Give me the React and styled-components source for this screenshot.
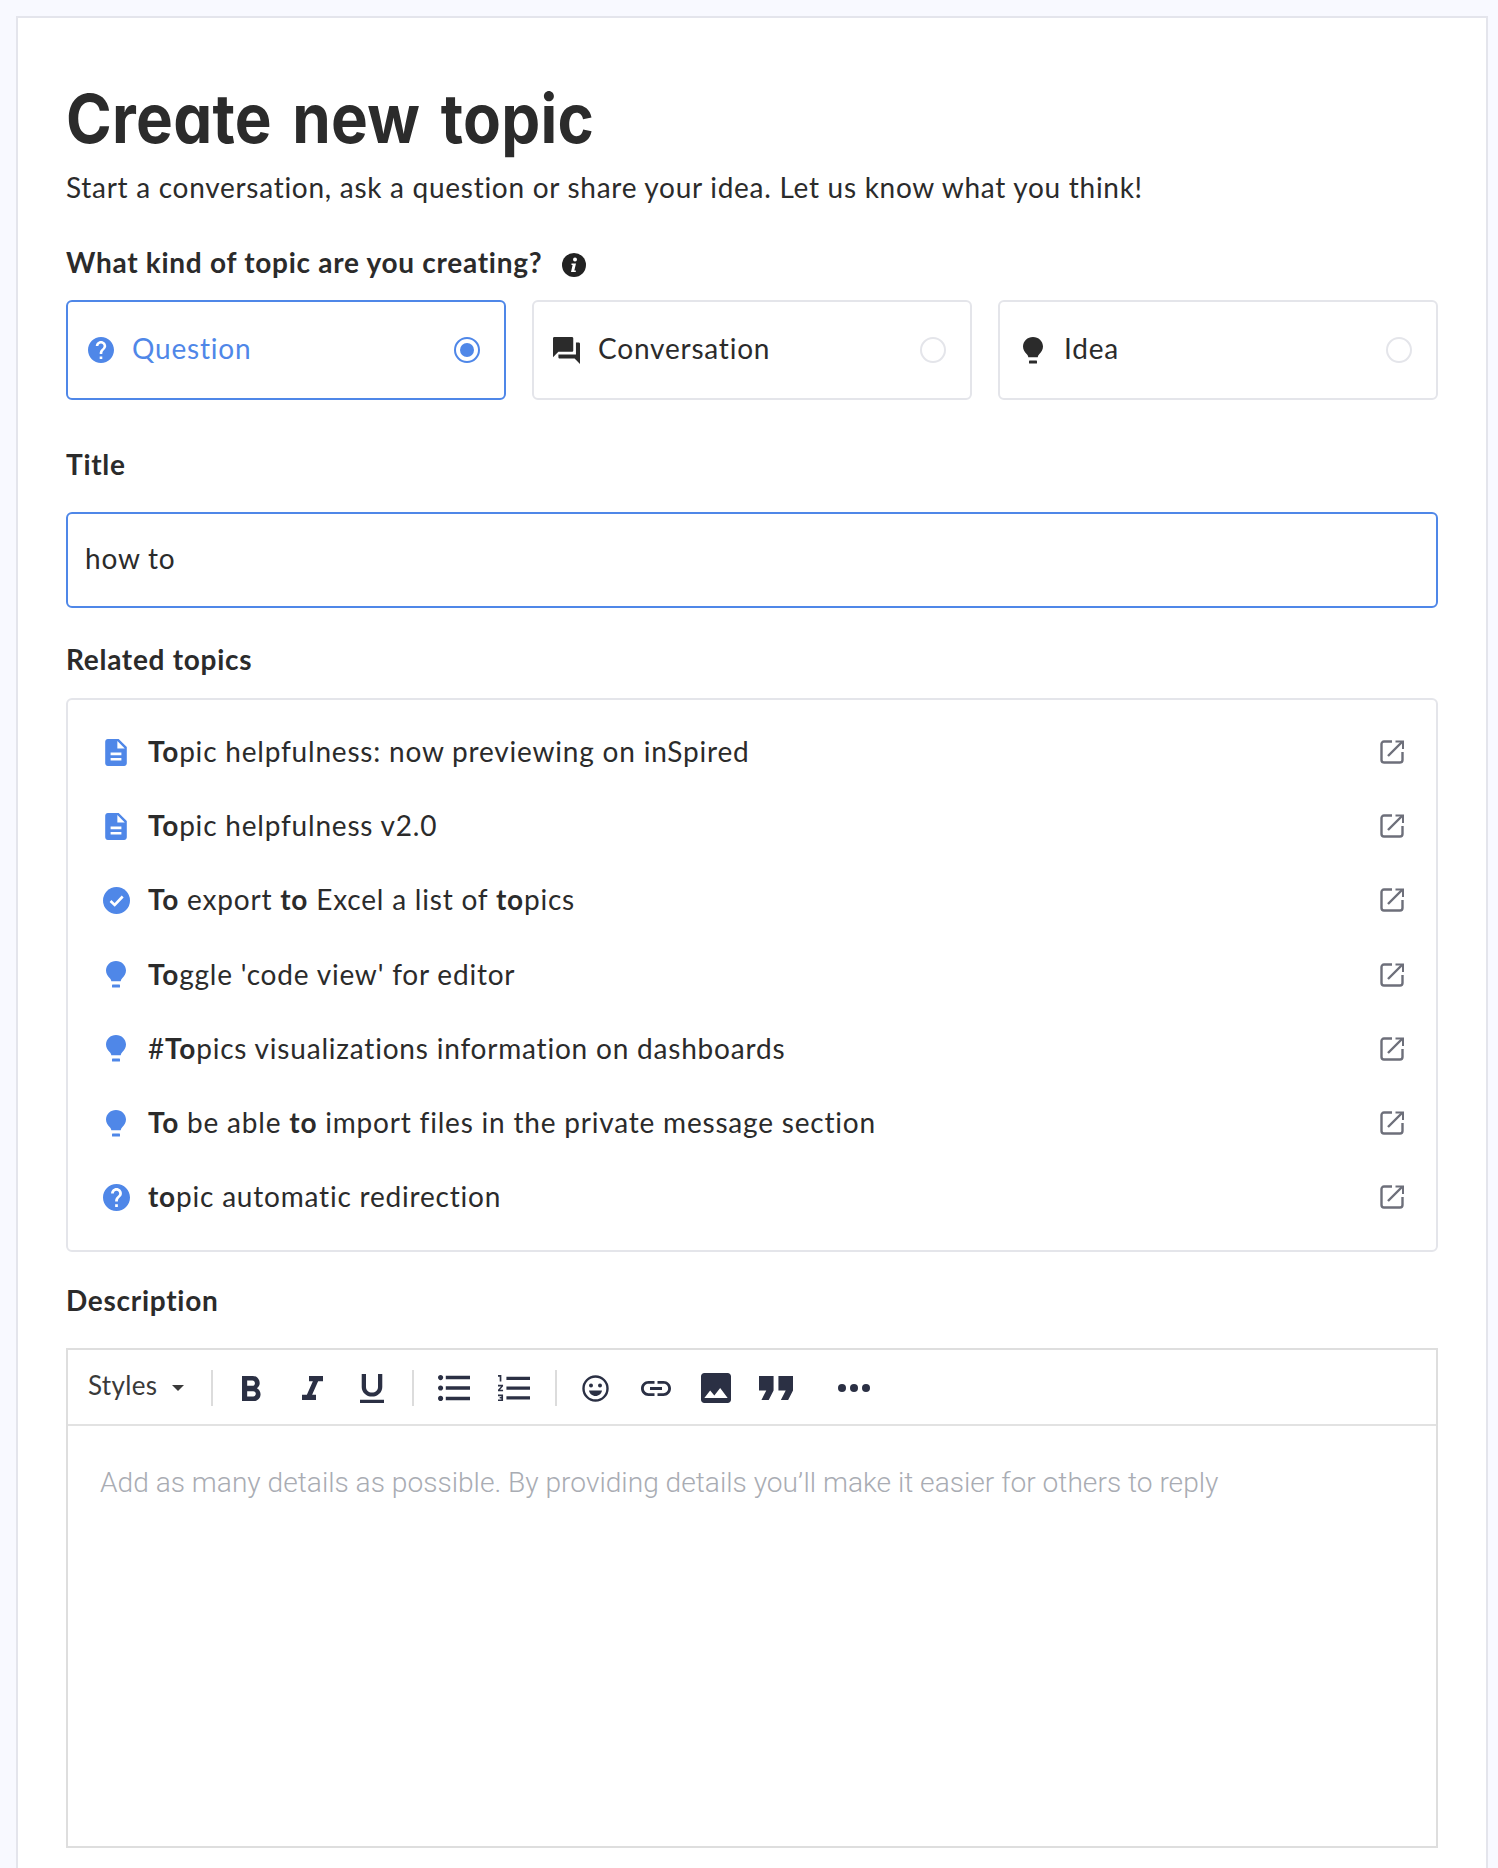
import React from "react";
import styled, { createGlobalStyle } from "styled-components";

const Global = createGlobalStyle`
  html, body { margin: 0; padding: 0; height: 1868px; overflow: hidden; background: #f8f9ff; }
  body { font-family: "Lato", "Noto Sans", sans-serif; color: #2b2b2b; }
`;

const BLUE = "#4f87e8";
const Page = styled.div`padding: 16px 10px 0 16px; height: 1868px; box-sizing: border-box;`;
const Card = styled.main`
  background: #fff; border: 2px solid #e4e5ec; border-bottom: none; box-sizing: border-box;
  height: 1852px; padding: 60px 48px 0;
`;
const Title = styled.h1`
  margin: 0; height: 80px; font: 700 68px/80px "Inter", sans-serif; font-feature-settings: "cv11";
  letter-spacing: .3px; word-spacing: 6px; color: #2b2b2b; transform: scaleX(.91); transform-origin: left center; white-space: nowrap;
`;
const Subtitle = styled.p`margin: 9px 0 0; font-size: 28px; line-height: 40px; letter-spacing: .72px;`;
const Label = styled.div`
  display: flex; align-items: center; gap: 20px; margin-top: ${p => p.$mt}px; height: 40px;
  font-size: 28px; font-weight: 700; letter-spacing: .72px;
`;
const LabelText = styled.span`padding-bottom: 2px;`;
const InfoWrap = styled.span`display: flex; margin-top: 3px;`;
const Options = styled.div`display: grid; grid-template-columns: repeat(3, 1fr); gap: 26px; margin-top: 17px;`;
const Option = styled.div`
  display: flex; align-items: center; box-sizing: border-box; height: 100px; padding: 0 24px 0 19px;
  border: 2px solid ${p => p.$active ? BLUE : "#e4e5ea"}; border-radius: 6px;
  color: ${p => p.$active ? BLUE : "#2b2b2b"}; font-size: 28px; letter-spacing: .8px;
`;
const OptionIcon = styled.span`display: flex; justify-content: center; width: 27px; margin-right: 18px; flex: none;`;
const OptionText = styled.span`flex: 1; padding-bottom: 4px;`;
const Radio = styled.span`
  width: 26px; height: 26px; box-sizing: border-box; border-radius: 50%; flex: none;
  border: 2px solid ${p => p.$active ? BLUE : "#e4e5ea"}; display: flex; align-items: center; justify-content: center;
  &::after { content: ""; width: 14px; height: 14px; border-radius: 50%; background: ${p => p.$active ? BLUE : "transparent"}; }
`;
const Input = styled.div`
  box-sizing: border-box; height: 96px; margin-top: 27px; padding: 0 17px 4px; display: flex; align-items: center;
  border: 2px solid ${BLUE}; border-radius: 6px; font-size: 28px; letter-spacing: .8px;
`;
const List = styled.ul`
  list-style: none; margin: 18px 0 0; padding: 15px 32px 14px 34px; box-sizing: border-box; height: 554px;
  border: 2px solid #e4e5ea; border-radius: 6px;
`;
const Row = styled.li`display: flex; align-items: center; height: 74.2px; font-size: 28px; letter-spacing: .8px;`;
const RowIcon = styled.span`display: flex; justify-content: center; width: 28px; margin-right: 18px; flex: none;`;
const RowText = styled.span`flex: 1; padding-bottom: 2px; b { font-weight: 700; }`;
const Editor = styled.div`
  margin-top: 27px; height: 500px; box-sizing: border-box; border: 2px solid #dedede; display: flex; flex-direction: column;
`;
const Toolbar = styled.div`
  display: flex; align-items: center; flex: none; padding: 2px 0 0 20px; box-sizing: content-box; height: 72px;
  border-bottom: 2px solid #e2e2e2; color: #2b3044;
`;
const StylesText = styled.span`font-size: 26px; letter-spacing: .35px; color: #3a3a3a; position: relative; top: -3px;`;
const Caret = styled.span`
  width: 0; height: 0; margin-left: 15px; border: 6px solid transparent; border-top: 6px solid #3a3a3a; border-bottom: none;
`;
const Divider = styled.span`width: 2px; height: 36px; margin-left: ${p => p.$ml}px; background: #dcdcdc; flex: none;`;
const Tool = styled.svg`margin-left: ${p => p.$ml}px; flex: none; fill: currentColor; display: block;`;
const Placeholder = styled.div`
  padding: 37px 32px; font: 300 28.13px/40px "Roboto", sans-serif; color: #a9acb3;
`;

const P = {
  help: "M12 2C6.48 2 2 6.48 2 12s4.48 10 10 10 10-4.48 10-10S17.52 2 12 2zm1 17h-2v-2h2v2zm2.07-7.75l-.9.92C13.45 12.9 13 13.5 13 15h-2v-.5c0-1.1.45-2.1 1.17-2.83l1.24-1.26c.37-.36.59-.86.59-1.41 0-1.1-.9-2-2-2s-2 .9-2 2H8c0-2.21 1.79-4 4-4s4 1.79 4 4c0 .88-.36 1.68-.93 2.25z",
  forum: "M21 6h-2v9H6v2c0 .55.45 1 1 1h11l4 4V7c0-.55-.45-1-1-1zm-4 6V3c0-.55-.45-1-1-1H3c-.55 0-1 .45-1 1v14l4-4h10c.55 0 1-.45 1-1z",
  doc: "M14 2H6c-1.1 0-2 .9-2 2v16c0 1.1.9 2 2 2h12c1.1 0 2-.9 2-2V8l-6-6zm2 16H8v-2h8v2zm0-4H8v-2h8v2zm-3-5V3.5L18.5 9H13z",
  bold: "M15.6 10.79c.97-.67 1.65-1.77 1.65-2.79 0-2.26-1.75-4-4-4H7v14h7.04c2.09 0 3.71-1.7 3.71-3.79 0-1.52-.86-2.82-2.15-3.42zM10 6.5h3c.83 0 1.5.67 1.5 1.5s-.67 1.5-1.5 1.5h-3v-3zm3.5 9H10v-3h3.5c.83 0 1.5.67 1.5 1.5s-.67 1.5-1.5 1.5z",
  italic: "M10 4v3h2.21l-3.42 8H6v3h8v-3h-2.21l3.42-8H18V4z",
  under: "M12 17c3.31 0 6-2.69 6-6V3h-2.5v8c0 1.93-1.57 3.5-3.5 3.5S8.5 12.93 8.5 11V3H6v8c0 3.31 2.69 6 6 6zm-7 2v2h14v-2H5z",
  bullets: "M4 10.5c-.83 0-1.5.67-1.5 1.5s.67 1.5 1.5 1.5 1.5-.67 1.5-1.5-.67-1.5-1.5-1.5zm0-6c-.83 0-1.5.67-1.5 1.5S3.17 7.5 4 7.5 5.5 6.83 5.5 6 4.83 4.5 4 4.5zm0 12c-.83 0-1.5.68-1.5 1.5s.68 1.5 1.5 1.5 1.5-.68 1.5-1.5-.67-1.5-1.5-1.5zM7 19h14v-2H7v2zm0-6h14v-2H7v2zm0-8v2h14V5H7z",
  numbers: "M2 17h2v.5H3v1h1v.5H2v1h3v-4H2v1zm1-9h1V4H2v1h1v3zm-1 3h1.8L2 13.1v.9h3v-1H3.2L5 10.9V10H2v1zm5-6v2h14V5H7zm0 14h14v-2H7v2zm0-6h14v-2H7v2z",
  link: "M3.9 12c0-1.71 1.39-3.1 3.1-3.1h4V7H7c-2.76 0-5 2.24-5 5s2.24 5 5 5h4v-1.9H7c-1.71 0-3.1-1.39-3.1-3.1zM8 13h8v-2H8v2zm9-6h-4v1.9h4c1.71 0 3.1 1.39 3.1 3.1s-1.39 3.1-3.1 3.1h-4V17h4c2.76 0 5-2.24 5-5s-2.24-5-5-5z",
  image: "M21 19V5c0-1.1-.9-2-2-2H5c-1.1 0-2 .9-2 2v14c0 1.1.9 2 2 2h14c1.1 0 2-.9 2-2zM8.5 13.5l2.5 3.01L14.5 12l4.5 6H5l3.5-4.5z",
  quote: "M6 17h3l2-4V7H5v6h3zm8 0h3l2-4V7h-6v6h3z",
};

const Help = ({ color, size = 26 }) => <svg width={size} height={size} viewBox="2 2 20 20" fill={color}><path d={P.help} /></svg>;
const Forum = () => <svg width="27" height="27" viewBox="2 2 20 20" fill="#2b2b2b"><path d={P.forum} /></svg>;
const Bulb = ({ color }) => (
  <svg width="20" height="27" viewBox="0 0 20 27" fill={color}>
    <path d="M10 0C4.5 0 0 4.2 0 9.6c0 3.3 1.8 5.7 3.6 7.4 1 1 1.5 2 1.7 3.2h9.4c.2-1.2.7-2.2 1.7-3.2 1.8-1.7 3.6-4.1 3.6-7.4C20 4.2 15.5 0 10 0z" />
    <rect x="6" y="23.6" width="8" height="3" rx=".6" />
  </svg>
);
const Doc = () => <svg width="22" height="27" viewBox="4 2 16 20" fill={BLUE}><path d={P.doc} /></svg>;
const Check = () => (
  <svg width="27" height="27" viewBox="0 0 27 27">
    <circle cx="13.5" cy="13.5" r="13.5" fill={BLUE} />
    <path d="M7.5 14l4.2 4 8-8.5" fill="none" stroke="#fff" strokeWidth="2.6" />
  </svg>
);
const External = () => (
  <svg width="24" height="24" viewBox="0 0 24 24" fill="none" stroke="#6d6f7a" strokeWidth="2.4">
    <path d="M12 1.500H4A2.500 2.500 0 0 0 1.500 4v16A2.500 2.500 0 0 0 4 22.500h16a2.500 2.500 0 0 0 2.500-2.500v-8" />
    <path d="M8 16L22 2" />
    <path d="M15.500 1.500h7.500V9" strokeWidth="2" />
  </svg>
);
const Info = () => (
  <svg width="24" height="24" viewBox="0 0 24 24">
    <circle cx="12" cy="12" r="12" fill="#222" />
    <circle cx="13" cy="6.500" r="2" fill="#fff" />
    <path d="M9.500 10.500h4.500l-1.700 7h1.500v1.500H9l1.600-7H9.500z" fill="#fff" />
  </svg>
);

const rows = [
  [<Doc />, <><b>To</b>pic helpfulness: now previewing on inSpired</>],
  [<Doc />, <><b>To</b>pic helpfulness v2.0</>],
  [<Check />, <><b>To</b> export <b>to</b> Excel a list of <b>to</b>pics</>],
  [<Bulb color={BLUE} />, <><b>To</b>ggle 'code view' for editor</>],
  [<Bulb color={BLUE} />, <>#<b>To</b>pics visualizations information on dashboards</>],
  [<Bulb color={BLUE} />, <><b>To</b> be able <b>to</b> import files in the private message section</>],
  [<Help color={BLUE} size={27} />, <><b>to</b>pic automatic redirection</>],
];

export default function App() {
  return (
    <Page>
      <Global />
      <Card>
        <Title>Create new topic</Title>
        <Subtitle>Start a conversation, ask a question or share your idea. Let us know what you think!</Subtitle>
        <Label $mt={36}><LabelText>What kind of topic are you creating?</LabelText> <InfoWrap><Info /></InfoWrap></Label>
        <Options>
          <Option $active><OptionIcon><Help color={BLUE} /></OptionIcon><OptionText>Question</OptionText><Radio $active /></Option>
          <Option><OptionIcon><Forum /></OptionIcon><OptionText>Conversation</OptionText><Radio /></Option>
          <Option><OptionIcon><Bulb color="#2b2b2b" /></OptionIcon><OptionText>Idea</OptionText><Radio /></Option>
        </Options>
        <Label $mt={45}><LabelText>Title</LabelText></Label>
        <Input>how to</Input>
        <Label $mt={32}><LabelText>Related topics</LabelText></Label>
        <List>
          {rows.map(([icon, text], i) => (
            <Row key={i}><RowIcon>{icon}</RowIcon><RowText>{text}</RowText><External /></Row>
          ))}
        </List>
        <Label $mt={29}><LabelText>Description</LabelText></Label>
        <Editor>
          <Toolbar>
            <StylesText>Styles</StylesText>
            <Caret />
            <Divider $ml={27} />
            <Tool $ml={29} width="19" height="25" viewBox="7 4 11 14" preserveAspectRatio="none"><path d={P.bold} /></Tool>
            <Tool $ml={41} width="21" height="24" viewBox="6 4 12 14" preserveAspectRatio="none"><path d={P.italic} /></Tool>
            <Tool $ml={37} width="24" height="29" viewBox="5 3 14 18" preserveAspectRatio="none"><path d={P.under} /></Tool>
            <Divider $ml={28} />
            <Tool $ml={24} width="32" height="26" viewBox="2.500 4.500 18.500 15" preserveAspectRatio="none"><path d={P.bullets} /></Tool>
            <Tool $ml={28} width="32" height="26" viewBox="2 4 19 16" preserveAspectRatio="none"><path d={P.numbers} /></Tool>
            <Divider $ml={25} />
            <Tool $ml={25} width="27" height="27" viewBox="0 0 27 27">
              <circle cx="13.500" cy="13.500" r="12" fill="none" stroke="currentColor" strokeWidth="2.400" />
              <circle cx="9" cy="10.500" r="2" /><circle cx="18" cy="10.500" r="2" />
              <path d="M7 15.500h13c-.6 3.200-3.200 5.500-6.500 5.500S7.600 18.700 7 15.500z" />
            </Tool>
            <Tool $ml={32} width="30" height="15" viewBox="2 7 20 10"><path d={P.link} /></Tool>
            <Tool $ml={30} width="30" height="30" viewBox="3 3 18 18"><path d={P.image} /></Tool>
            <Tool $ml={28} width="34" height="24" viewBox="5 7 14 10" preserveAspectRatio="none"><path d={P.quote} /></Tool>
            <Tool $ml={45} width="32" height="8" viewBox="0 0 32 8"><circle cx="4" cy="4" r="4" /><circle cx="16" cy="4" r="4" /><circle cx="28" cy="4" r="4" /></Tool>
          </Toolbar>
          <Placeholder>Add as many details as possible. By providing details you’ll make it easier for others to reply</Placeholder>
        </Editor>
      </Card>
    </Page>
  );
}
